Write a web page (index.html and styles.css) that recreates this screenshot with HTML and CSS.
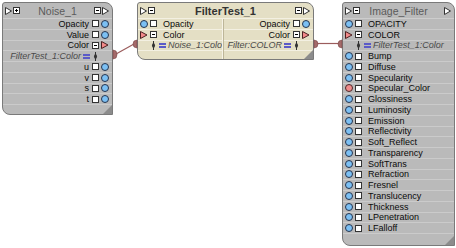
FILE: index.html
```html
<!DOCTYPE html>
<html lang="en">
<head>
    <meta charset="UTF-8">
    <title>FX Tree</title>
    <link rel="stylesheet" href="styles.css">
</head>
<body>
<div class="canvas">

    <div class="node noise">
        <div class="head">
            <span class="tools">
                <svg class="tri" width="7" height="8"><polygon points="0.5,0.5 6.5,4 0.5,7.5"/></svg>
                <i class="box plus"></i>
            </span>
            <span class="title">Noise_1</span>
            <span class="tools right">
                <i class="box minus"></i>
                <svg class="tri" width="7" height="8"><polygon points="0.5,0.5 6.5,4 0.5,7.5"/></svg>
            </span>
        </div>
        <div class="row out">Opacity<i class="box"></i><i class="port"></i></div>
        <div class="row out">Value<i class="box"></i><i class="port"></i></div>
        <div class="row out">Color<i class="box minus"></i><svg class="tri pink" width="8" height="8"><polygon points="0.5,0.5 7,4 0.5,7.5"/></svg></div>
        <div class="row out link"><em>FilterTest_1:Color</em><i class="eq"></i><svg class="pin" width="7" height="9"><line x1="3.5" y1="0" x2="3.5" y2="9"/><ellipse cx="3.5" cy="4.5" rx="1.5" ry="2.2"/></svg><i class="gap"></i></div>
        <div class="row out">u<i class="box"></i><i class="port"></i></div>
        <div class="row out">v<i class="box"></i><i class="port"></i></div>
        <div class="row out">s<i class="box"></i><i class="port"></i></div>
        <div class="row out">t<i class="box"></i><i class="port"></i></div>
    </div>

    <div class="node filter">
        <div class="head">
            <span class="tools">
                <svg class="tri" width="7" height="8"><polygon points="0.5,0.5 6.5,4 0.5,7.5"/></svg>
                <i class="box minus"></i>
            </span>
            <span class="title bold">FilterTest_1</span>
            <span class="tools right">
                <i class="box minus"></i>
                <svg class="tri" width="7" height="8"><polygon points="0.5,0.5 6.5,4 0.5,7.5"/></svg>
            </span>
        </div>
        <div class="split">
            <div class="col">
                <div class="row in"><i class="port"></i><i class="box"></i>Opacity</div>
                <div class="row in"><svg class="tri pink" width="8" height="8"><polygon points="0.5,0.5 7,4 0.5,7.5"/></svg><i class="box minus"></i>Color</div>
                <div class="row in link"><i class="gap"></i><svg class="pin" width="7" height="9"><line x1="3.5" y1="0" x2="3.5" y2="9"/><ellipse cx="3.5" cy="4.5" rx="1.5" ry="2.2"/></svg><i class="eq"></i><em>Noise_1:Colo</em></div>
            </div>
            <div class="col second">
                <div class="row out">Opacity<i class="box"></i><i class="port"></i></div>
                <div class="row out">Color<i class="box minus"></i><svg class="tri pink" width="8" height="8"><polygon points="0.5,0.5 7,4 0.5,7.5"/></svg></div>
                <div class="row out link"><em>Filter:COLOR</em><i class="eq"></i><svg class="pin" width="7" height="9"><line x1="3.5" y1="0" x2="3.5" y2="9"/><ellipse cx="3.5" cy="4.5" rx="1.5" ry="2.2"/></svg><i class="gap"></i></div>
            </div>
        </div>
    </div>

    <div class="node image">
        <div class="head">
            <span class="tools">
                <svg class="tri" width="7" height="8"><polygon points="0.5,0.5 6.5,4 0.5,7.5"/></svg>
                <i class="box minus"></i>
            </span>
            <span class="title">Image_Filter</span>
            <span class="tools right">
                <svg class="tri" width="7" height="8"><polygon points="0.5,0.5 6.5,4 0.5,7.5"/></svg>
            </span>
        </div>
        <div class="row in"><i class="port"></i><i class="box"></i>OPACITY</div>
        <div class="row in"><svg class="tri pink" width="8" height="8"><polygon points="0.5,0.5 7,4 0.5,7.5"/></svg><i class="box minus"></i>COLOR</div>
        <div class="row in link"><i class="gap"></i><svg class="pin" width="7" height="9"><line x1="3.5" y1="0" x2="3.5" y2="9"/><ellipse cx="3.5" cy="4.5" rx="1.5" ry="2.2"/></svg><i class="eq"></i><em>FilterTest_1:Color</em></div>
        <div class="row in"><i class="port"></i><i class="box"></i>Bump</div>
        <div class="row in"><i class="port"></i><i class="box"></i>Diffuse</div>
        <div class="row in"><i class="port"></i><i class="box"></i>Specularity</div>
        <div class="row in"><i class="port pink"></i><i class="box"></i>Specular_Color</div>
        <div class="row in"><i class="port"></i><i class="box"></i>Glossiness</div>
        <div class="row in"><i class="port"></i><i class="box"></i>Luminosity</div>
        <div class="row in"><i class="port"></i><i class="box"></i>Emission</div>
        <div class="row in"><i class="port"></i><i class="box"></i>Reflectivity</div>
        <div class="row in"><i class="port"></i><i class="box"></i>Soft_Reflect</div>
        <div class="row in"><i class="port"></i><i class="box"></i>Transparency</div>
        <div class="row in"><i class="port"></i><i class="box"></i>SoftTrans</div>
        <div class="row in"><i class="port"></i><i class="box"></i>Refraction</div>
        <div class="row in"><i class="port"></i><i class="box"></i>Fresnel</div>
        <div class="row in"><i class="port"></i><i class="box"></i>Translucency</div>
        <div class="row in"><i class="port"></i><i class="box"></i>Thickness</div>
        <div class="row in"><i class="port"></i><i class="box"></i>LPenetration</div>
        <div class="row in"><i class="port"></i><i class="box"></i>LFalloff</div>
    </div>

    <!-- connections between nodes -->
    <svg class="wires" width="456" height="248">
        <line x1="116" y1="54" x2="134" y2="44"/>
        <line x1="317" y1="43.5" x2="339" y2="43.5"/>
        <path class="tab" d="M113 50 L116 51 Q118 54.5 116 58 L113 59 Z"/>
        <path class="tab" d="M137 40 L134 41 Q132 44 134 47 L137 48 Z"/>
        <path class="tab" d="M314 40 L317 41 Q319 44 317 47 L314 48 Z"/>
        <path class="tab" d="M342 40 L339 41 Q337 44 339 47 L342 48 Z"/>
    </svg>
</div>
</body>
</html>
```

FILE: styles.css
```css
body { margin: 0; background: #fff; font-family: "Liberation Sans", Arial, sans-serif; }
.canvas { position: relative; width: 456px; height: 248px; overflow: hidden; }

.node { position: absolute; box-sizing: border-box; background: #bababa; border: 1px solid #7a7a7a; border-radius: 3px 8px 0 8px; overflow: hidden; }
.node::after { content: ""; position: absolute; right: 0; bottom: 0; border-style: solid; border-width: 0 0 9px 9px; border-color: transparent transparent #8c8c8c transparent; }
.noise { left: 2px; top: 2px; width: 111px; height: 113px; }
.filter { left: 137px; top: 2px; width: 177px; height: 58px; background: #e4dfc5; }
.image { left: 342px; top: 2px; width: 113px; height: 244px; }

.head { height: 15px; display: grid; grid-template-columns: 1fr auto 1fr; align-items: center; border-bottom: 1px solid #cdcdcd; }
.filter .head { border-bottom-color: #f3f0e2; }
.tools { display: flex; align-items: center; gap: 1px; padding-left: 2px; }
.tools.right { justify-content: flex-end; padding: 0 3px 0 0; }
.title { font-size: 10.5px; color: #5b5b5b; white-space: nowrap; }
.title.bold { font-weight: bold; font-size: 11px; color: #333; }

.row { height: 10.75px; box-sizing: border-box; display: flex; align-items: center; gap: 2px; font-size: 9px; color: #0a0a0a; white-space: nowrap; border-bottom: 1px solid #cbcbcb; }
.filter .row { border-bottom-color: #f3f0e2; }
.row.out { justify-content: flex-end; padding-right: 3px; }
.row.in { padding-left: 2px; }
.row.in .box { margin-right: 4px; }
.row.out .box { margin-left: 1px; }
.row em { font-style: italic; color: #4a4a4a; }

.split { display: flex; height: 41px; }
.col { width: 85px; box-sizing: border-box; border-right: 1px solid #f6f3e6; overflow: hidden; }
.col.second { flex: 1; border-right: 0; border-left: 1px solid #bdb699; }

.box { display: block; flex: none; width: 7px; height: 7px; box-sizing: border-box; border: 1px solid #333; background: #fff; position: relative; }
.box.minus::after { content: ""; position: absolute; left: 1px; top: 2px; width: 3px; height: 1px; background: #000; }
.box.plus::after { content: ""; position: absolute; left: 1px; top: 2px; width: 3px; height: 1px; background: #000; }
.box.plus::before { content: ""; position: absolute; left: 2px; top: 1px; width: 1px; height: 3px; background: #000; }
.port { display: block; flex: none; width: 8px; height: 8px; box-sizing: border-box; border-radius: 50%; border: 1px solid #26344e; background: #7cc0f4; }
.port.pink { background: #f08c8c; border-color: #4e2626; }
.gap { display: block; flex: none; width: 8px; }
.tri { display: block; flex: none; }
.tri polygon { fill: #fff; stroke: #333; stroke-width: 1; }
.tri.pink polygon { fill: #f28a8a; stroke: #4a2020; }
.pin { display: block; flex: none; }
.pin line { stroke: #333; stroke-width: 1; }
.pin ellipse { fill: #333; }
.eq { display: block; flex: none; width: 7px; height: 5px; background: linear-gradient(#5a5ac8 0 2px, transparent 2px 3px, #5a5ac8 3px 5px); }

.wires { position: absolute; left: 0; top: 0; }
.wires line { stroke: #9b5c5c; stroke-width: 1.2; }
.wires .tab { fill: #a46a6a; stroke: #7a4444; stroke-width: 0.6; }
```
